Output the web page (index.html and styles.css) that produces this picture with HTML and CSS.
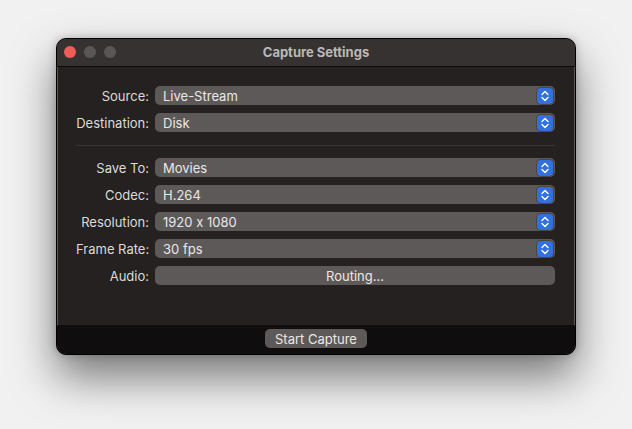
FILE: index.html
```html
<!DOCTYPE html>
<html lang="en">
<head>
  <meta charset="UTF-8" /><meta name="viewport" content="width=device-width, initial-scale=1.0" />
  <title>Capture Settings</title>
  <link rel="stylesheet" href="styles.css">
</head>
<body>
  <div class="window">
    <div class="titlebar">
      <div class="lights">
        <span class="light close"></span>
        <span class="light"></span>
        <span class="light"></span>
      </div>
      <div class="title">Capture Settings</div>
    </div>

    <div class="content">
      <div class="form">
        <label>Source:</label>
        <div class="popup"><span>Live-Stream</span><i class="stepper"></i></div>
        <label>Destination:</label>
        <div class="popup"><span>Disk</span><i class="stepper"></i></div>
      </div>

      <hr class="sep" />

      <div class="form">
        <label>Save To:</label>
        <div class="popup"><span>Movies</span><i class="stepper"></i></div>
        <label>Codec:</label>
        <div class="popup"><span>H.264</span><i class="stepper"></i></div>
        <label>Resolution:</label>
        <div class="popup"><span>1920 x 1080</span><i class="stepper"></i></div>
        <label>Frame Rate:</label>
        <div class="popup"><span>30 fps</span><i class="stepper"></i></div>
        <label>Audio:</label>
        <button class="btn wide">Routing...</button>
      </div>
    </div>

    <div class="footer">
      <button class="btn">Start Capture</button>
    </div>
  </div>

  <svg width="0" height="0" style="position:absolute">
    <defs>
      <symbol id="chev" viewBox="0 0 16 16">
        <path d="M5 6.5 L8 3.5 L11 6.5 M5 9.5 L8 12.5 L11 9.5" fill="none" stroke="#fff" stroke-width="1.4" stroke-linecap="round" stroke-linejoin="round"/>
      </symbol>
    </defs>
  </svg>

  <script>
    document.querySelectorAll('.stepper').forEach(function (el) {
      el.innerHTML = '<svg width="16" height="16"><use href="#chev"/></svg>';
    });
  </script>
</body>
</html>
```

FILE: styles.css
```css
html { background: #f1f1f1; }
body { margin: 0; min-height: 429px; font-family: Inter, "Liberation Sans", Arial, sans-serif; font-feature-settings: "calt" 0; font-size: 13px; color: #dcdad9; }
.window { margin: 38px 0 0 56px; width: 520px; height: 317px; box-sizing: border-box; border: 1px solid #000; border-radius: 10px; overflow: hidden; display: flex; flex-direction: column; background: #242120; box-shadow: inset 0 0 0 1px #5a5756, 0 22px 44px rgba(0,0,0,0.5), 0 0 8px rgba(0,0,0,0.22); }
.titlebar { height: 28px; flex: none; box-sizing: border-box; padding-bottom: 2px; background: #363232; border-bottom: 1px solid #0c0b0b; position: relative; display: flex; align-items: center; justify-content: center; }
.lights { position: absolute; left: 7px; top: 7px; display: flex; gap: 8px; }
.light { width: 12px; height: 12px; border-radius: 50%; background: #5a5655; }
.light.close { background: #ee5e57; }
.title { font-weight: 700; color: #bbb8b6; font-size: 13px; }
.content { flex: 1; padding: 19px 20px 0 19px; }
.form { display: grid; grid-template-columns: 73px 1fr; column-gap: 6px; row-gap: 8px; align-items: center; }
.form label { text-align: right; white-space: nowrap; color: #dddbda; }
.popup { height: 19px; background: #5d5958; border-radius: 5px; display: flex; align-items: center; justify-content: space-between; padding: 0 2px 0 8px; color: #eae8e7; }
.stepper { width: 16px; height: 16px; border-radius: 4px; background: #3271dd; display: block; box-shadow: 0 0 0 1px #4a4645; }
.stepper svg { display: block; }
.sep { border: 0; border-top: 1px solid #383534; margin: 13px 0 12px 0; }
.btn { font: inherit; color: #eae8e7; background: #5d5958; border: 0; border-radius: 5px; height: 19px; padding: 0 10px; }
.btn.wide { width: 100%; }
.footer { height: 29px; flex: none; box-sizing: border-box; padding-bottom: 2px; background: #0f0d0d; display: flex; align-items: center; justify-content: center; }
```
